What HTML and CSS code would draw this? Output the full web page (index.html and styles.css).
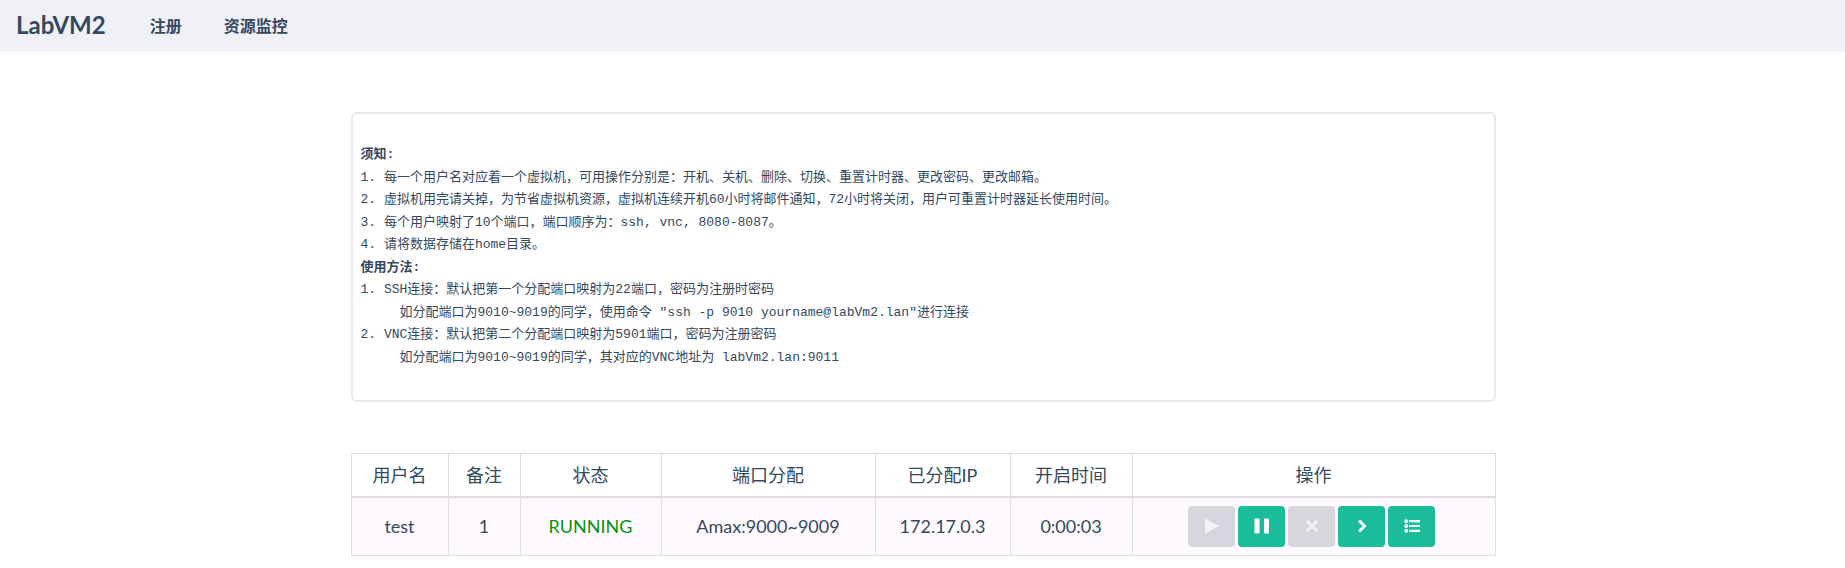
FILE: index.html
```
<!DOCTYPE html>
<html lang="zh-CN">
<head>
<meta charset="utf-8">
<title>LabVM2</title>
<link rel="stylesheet" href="styles.css">
</head>
<body>
<nav class="navbar">
  <a class="brand" href="#">LabVM2</a>
  <a class="nav-link" href="#">注册</a>
  <a class="nav-link" href="#">资源监控</a>
</nav>
<main class="container">
<pre class="notice">

<strong>须知:</strong>
1. 每一个用户名对应着一个虚拟机，可用操作分别是：开机、关机、删除、切换、重置计时器、更改密码、更改邮箱。
2. 虚拟机用完请关掉，为节省虚拟机资源，虚拟机连续开机60小时将邮件通知，72小时将关闭，用户可重置计时器延长使用时间。
3. 每个用户映射了10个端口，端口顺序为：ssh, vnc, 8080-8087。
4. 请将数据存储在home目录。
<strong>使用方法:</strong>
1. SSH连接：默认把第一个分配端口映射为22端口，密码为注册时密码
     如分配端口为9010~9019的同学，使用命令 "ssh -p 9010 yourname@labVm2.lan"进行连接
2. VNC连接：默认把第二个分配端口映射为5901端口，密码为注册密码
     如分配端口为9010~9019的同学，其对应的VNC地址为 labVm2.lan:9011
<span class="blank-line"></span>
</pre>
<table class="vm-table">
  <colgroup>
    <col class="col-user"><col class="col-note"><col class="col-state"><col class="col-port"><col class="col-ip"><col class="col-time"><col>
  </colgroup>
  <thead>
    <tr><th>用户名</th><th>备注</th><th>状态</th><th>端口分配</th><th>已分配IP</th><th>开启时间</th><th>操作</th></tr>
  </thead>
  <tbody>
    <tr>
      <td>test</td><td>1</td><td class="running">RUNNING</td><td>Amax:9000~9009</td><td>172.17.0.3</td><td>0:00:03</td>
      <td>
        <div class="actions">
          <button class="btn" type="button" disabled aria-label="开机"><svg viewBox="0 0 16 16"><path d="M1 0.5 15 8 1 15.5z"/></svg></button>
          <button class="btn" type="button" aria-label="关机"><svg viewBox="0 0 16 16"><rect x="0.5" y="0.5" width="5" height="15" rx="1"/><rect x="10" y="0.5" width="5" height="15" rx="1"/></svg></button>
          <button class="btn" type="button" disabled aria-label="删除"><svg viewBox="0 0 16 16"><path class="stroke" d="M2.8 2.8 13.2 13.2M13.2 2.8 2.8 13.2"/></svg></button>
          <button class="btn" type="button" aria-label="切换"><svg viewBox="0 0 16 16"><path class="stroke" d="M5 2.5 10.5 8 5 13.5"/></svg></button>
          <button class="btn" type="button" aria-label="更多操作"><svg viewBox="0 0 16 16"><circle cx="2.2" cy="3.2" r="1.9"/><circle cx="2.2" cy="8" r="1.9"/><circle cx="2.2" cy="12.8" r="1.9"/><path d="M5 2h11v2.2H5zM5 7h11v2H5zM5 11.8h11v2.2H5z"/></svg></button>
        </div>
      </td>
    </tr>
  </tbody>
</table>
</main>
</body>
</html>
```

FILE: styles.css
```
* { box-sizing: border-box; }
body {
  margin: 0;
  background: #fff;
  color: #34495e;
  font-family: Lato, "Noto Sans CJK SC", sans-serif;
  font-size: 18px;
}
.navbar {
  display: flex;
  align-items: center;
  height: 52px;
  padding: 0 16px 3px;
  background: #eff1f7;
}
.navbar a { color: #34495e; font-weight: 700; text-decoration: none; }
.navbar .brand { font-size: 24px; margin-right: 26px; }
.nav-link { font-size: 16px; padding: 0 18px; }
.nav-link + .nav-link { margin-left: 6px; }
.container {
  max-width: 1146px;
  margin: 0 auto;
  padding: 60px 0 12px 1px;
}
.notice {
  margin: 0 0 51px;
  padding: 8px;
  border: 2px solid #e7e9ee;
  border-radius: 6px;
  font-family: "Liberation Mono", "Noto Sans CJK SC", monospace;
  font-size: 13px;
  line-height: 1.73;
  white-space: pre-wrap;
}
.vm-table {
  width: 100%;
  table-layout: fixed;
  border-collapse: collapse;
  text-align: center;
}
.col-user { width: 97px; }
.col-note { width: 72px; }
.col-state { width: 141px; }
.col-port { width: 214px; }
.col-ip { width: 135px; }
.col-time { width: 122px; }
.vm-table th, .vm-table td { border: 1px solid #ddd; padding: 8px; }
.vm-table th { padding: 7px 8px; font-weight: 400; line-height: 28px; border-bottom: 2px solid #ddd; }
.vm-table tbody { background: #fffaff; }
.vm-table .running { color: #0a930a; }
.actions { display: flex; justify-content: center; gap: 3px; padding-right: 4px; }
.btn {
  display: flex;
  align-items: center;
  justify-content: center;
  width: 47px;
  height: 41px;
  padding: 0;
  border: 0;
  border-radius: 4px;
  background: #1abc9c;
  color: #fff;
}
.btn:disabled { background: #d5d6de; color: #f5f1f7; }
.btn svg { width: 16px; height: 16px; fill: currentColor; }
.btn .stroke { fill: none; stroke: currentColor; stroke-width: 3; }
```
